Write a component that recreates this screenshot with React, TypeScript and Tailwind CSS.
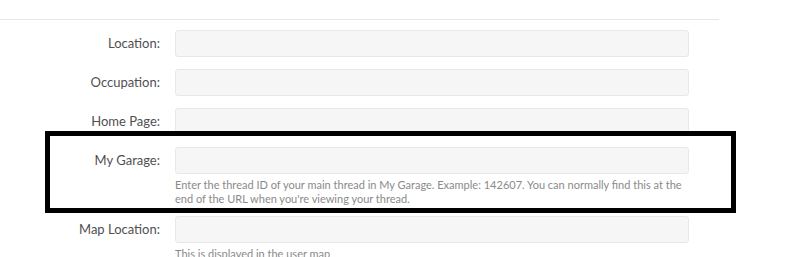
const rows: { label: string; help?: string }[] = [
  { label: "Location:" },
  { label: "Occupation:" },
  { label: "Home Page:" },
  {
    label: "My Garage:",
    help: "Enter the thread ID of your main thread in My Garage. Example: 142607. You can normally find this at the end of the URL when you're viewing your thread.",
  },
  { label: "Map Location:", help: "This is displayed in the user map" },
];

const App = () => {
  return (
    <div className="relative w-[792px] h-[257px] overflow-hidden bg-white font-['Lato','Liberation_Sans',sans-serif]">
      {/* top divider */}
      <div className="w-[719px] h-[20px] border-b border-[#e6e6e6]" />

      {/* form rows */}
      <div className="flex flex-col gap-[12px] pt-[10px]">
        {rows.map((row) => (
          <div key={row.label} className="flex gap-[15px]">
            <div className="w-[160px] h-[27px] flex items-center justify-end text-[13px] text-[#505050]">
              {row.label}
            </div>
            <div className="flex flex-col">
              <input
                type="text"
                className="w-[514px] h-[27px] rounded-[3px] border border-[#e8e8e8] bg-[#f6f6f6] outline-none"
              />
              {row.help && (
                <p className="mt-[4px] mb-[-2px] w-[514px] text-[11px] leading-[14px] text-[#8a8a8a]">
                  {row.help}
                </p>
              )}
            </div>
          </div>
        ))}
      </div>

      {/* highlight box */}
      <div className="absolute left-[45px] top-[131px] w-[691px] h-[82px] border-[5px] border-black" />
    </div>
  );
};

export default App;
